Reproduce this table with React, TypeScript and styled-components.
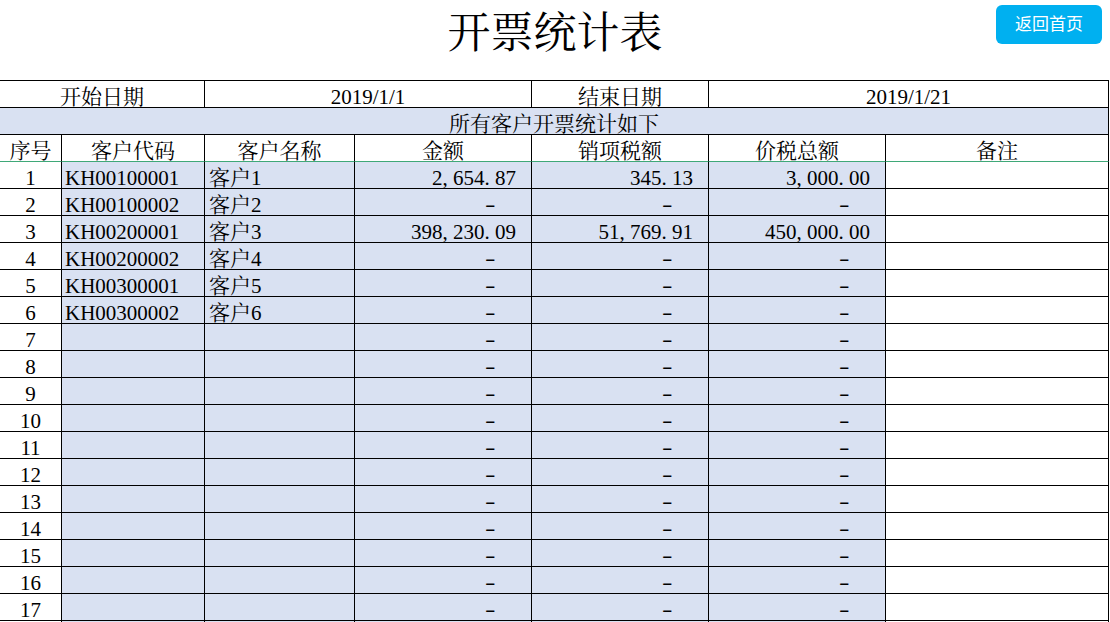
import React from "react";
import styled, { createGlobalStyle } from "styled-components";

const GlobalStyle = createGlobalStyle`
  html, body {
    margin: 0;
    padding: 0;
    background: #ffffff;
  }
  body {
    font-family: "Liberation Serif", "Noto Serif CJK SC", "Noto Sans CJK SC", serif;
    color: #000000;
  }
`;

const Page = styled.div`
  width: 1110px;
  height: 622px;
  overflow: hidden;
`;

const Header = styled.header`
  display: grid;
  grid-template-columns: 1fr auto 1fr;
  align-items: start;
  height: 80px;
`;

const Title = styled.h1`
  grid-column: 2;
  margin: 0;
  font-family: "Noto Serif CJK SC", "Noto Sans CJK SC", serif;
  font-weight: 400;
  font-size: 43px;
  line-height: 60px;
  letter-spacing: 0;
`;

const BackButton = styled.button`
  grid-column: 3;
  justify-self: end;
  margin: 5px 8px 0 0;
  width: 106px;
  height: 39px;
  border: none;
  border-radius: 6px;
  background: #00b0f0;
  color: #ffffff;
  font-family: "Noto Sans CJK SC", sans-serif;
  font-size: 17px;
  line-height: 20px;
  padding: 0 0 3px 0;
  cursor: pointer;
`;

const Sheet = styled.table`
  width: 1109px;
  table-layout: fixed;
  border-collapse: separate;
  border-spacing: 0;
  border-top: 1px solid #000000;
`;

type Align = "left" | "center" | "right";

const Cell = styled.td<{ $align?: Align; $fill?: boolean; $pr?: number; $pl?: number; $head?: boolean }>`
  box-sizing: border-box;
  height: 27px;
  padding: 0 ${(p) => p.$pr ?? 0}px 0 ${(p) => p.$pl ?? 0}px;
  border-right: 1px solid #000000;
  border-bottom: 1px solid ${(p) => (p.$head ? "#3fa878" : "#000000")};
  background: ${(p) => (p.$fill ? "#d9e1f2" : "#ffffff")};
  text-align: ${(p) => p.$align ?? "center"};
  vertical-align: bottom;
  font-size: 21px;
  line-height: 19px;
  white-space: nowrap;
  overflow: hidden;
`;

const Dash = styled.span`
  display: inline-block;
  width: 0.5em;
  text-align: center;
  transform: translateY(-1px) scaleX(1.5);
`;

const Punct = styled.span`
  display: inline-block;
  width: 0.5em;
  text-align: left;
`;

const Num: React.FC<{ value: string }> = ({ value }) => (
  <>
    {value.split("").map((ch, i) =>
      ch === "," || ch === "." ? <Punct key={i}>{ch}</Punct> : <React.Fragment key={i}>{ch}</React.Fragment>
    )}
  </>
);

const widths = [62, 143, 150, 177, 177, 177, 223];

type Row = { code: string; name: string; amount: string | null; tax: string | null; total: string | null };

const data: Row[] = [
  { code: "KH00100001", name: "客户1", amount: "2,654.87", tax: "345.13", total: "3,000.00" },
  { code: "KH00100002", name: "客户2", amount: null, tax: null, total: null },
  { code: "KH00200001", name: "客户3", amount: "398,230.09", tax: "51,769.91", total: "450,000.00" },
  { code: "KH00200002", name: "客户4", amount: null, tax: null, total: null },
  { code: "KH00300001", name: "客户5", amount: null, tax: null, total: null },
  { code: "KH00300002", name: "客户6", amount: null, tax: null, total: null },
];

const rows: Row[] = Array.from({ length: 17 }, (_, i) =>
  data[i] ?? { code: "", name: "", amount: null, tax: null, total: null }
);

const Money: React.FC<{ value: string | null }> = ({ value }) =>
  value ? (
    <Cell $fill $align="right" $pr={15}>
      <Num value={value} />
    </Cell>
  ) : (
    <Cell $fill $align="right" $pr={36}>
      <Dash>-</Dash>
    </Cell>
  );

export default function App() {
  return (
    <Page>
      <GlobalStyle />
      <Header>
        <Title>开票统计表</Title>
        <BackButton>返回首页</BackButton>
      </Header>
      <Sheet>
        <colgroup>
          {widths.map((w, i) => (
            <col key={i} style={{ width: w }} />
          ))}
        </colgroup>
        <tbody>
          <tr>
            <Cell colSpan={2}>开始日期</Cell>
            <Cell colSpan={2}>2019/1/1</Cell>
            <Cell>结束日期</Cell>
            <Cell colSpan={2}>2019/1/21</Cell>
          </tr>
          <tr>
            <Cell colSpan={7} $fill>
              所有客户开票统计如下
            </Cell>
          </tr>
          <tr>
            <Cell $head>序号</Cell>
            <Cell $head>客户代码</Cell>
            <Cell $head>客户名称</Cell>
            <Cell $head>金额</Cell>
            <Cell $head>销项税额</Cell>
            <Cell $head>价税总额</Cell>
            <Cell $head>备注</Cell>
          </tr>
          {rows.map((r, i) => (
            <tr key={i}>
              <Cell>{i + 1}</Cell>
              <Cell $fill $align="left" $pl={3}>
                {r.code}
              </Cell>
              <Cell $fill $align="left" $pl={4}>
                {r.name}
              </Cell>
              <Money value={r.amount} />
              <Money value={r.tax} />
              <Money value={r.total} />
              <Cell />
            </tr>
          ))}
          <tr>
            <Cell />
            <Cell $fill />
            <Cell $fill />
            <Cell $fill />
            <Cell $fill />
            <Cell $fill />
            <Cell />
          </tr>
        </tbody>
      </Sheet>
    </Page>
  );
}
